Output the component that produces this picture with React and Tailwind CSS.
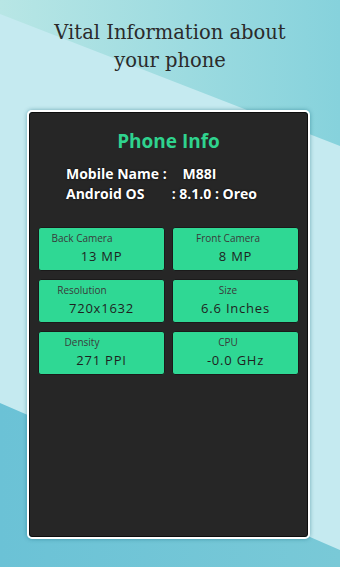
const tiles = [
  { label: "Back Camera", value: "13 MP" },
  { label: "Front Camera", value: "8 MP" },
  { label: "Resolution", value: "720x1632" },
  { label: "Size", value: "6.6 Inches" },
  { label: "Density", value: "271 PPI" },
  { label: "CPU", value: "-0.0 GHz" },
];

const Backdrop = () => (
  <svg className="absolute inset-0" width="340" height="567" viewBox="0 0 340 567">
    <defs>
      <linearGradient id="top" x1="0" y1="0" x2="1" y2="0">
        <stop offset="0" stopColor="#b8e6e5" />
        <stop offset="1" stopColor="#86d2dc" />
      </linearGradient>
      <linearGradient id="bot" x1="0" y1="0" x2="1" y2="0">
        <stop offset="0" stopColor="#6bc2d6" />
        <stop offset="1" stopColor="#79c9d7" />
      </linearGradient>
    </defs>
    <rect width="340" height="567" fill="#c5eaf0" />
    <polygon points="0,0 340,0 340,146 0,14" fill="url(#top)" />
    <polygon points="0,403 340,550 340,567 0,567" fill="url(#bot)" />
  </svg>
);

const Tile = ({ label, value, right }) => (
  <div className="h-[44px] rounded-[3px] border border-[#1a1a1a] bg-[#2fd894] pt-[4px]">
    <div className={"text-center text-[10px] leading-[13px] text-[#3a3a3a] " + (right ? "w-[110px]" : "w-[86px]")}>
      {label}
    </div>
    <div className="mt-[3px] text-center text-[13px] font-medium leading-[16px] tracking-[0.06em] text-[#1f1f1f]">
      {value}
    </div>
  </div>
);

const App = () => {
  return (
    <div className="relative h-[567px] w-[340px] overflow-hidden" style={{ fontFamily: "'Open Sans', sans-serif" }}>
      <Backdrop />
      <div className="relative flex flex-col">
        <h1 className="pt-[19px] text-center text-[19.5px] leading-[28px] text-[#2b2b2b]" style={{ fontFamily: "'DejaVu Serif', serif" }}>
          Vital Information about
          <br />
          your phone
        </h1>
        <div className="ml-[27px] mt-[35px] h-[429px] w-[283px] rounded-[5px] border-2 border-white shadow-[0_0_4px_rgba(0,90,110,0.45)]">
          <div className="h-full rounded-[3px] border border-[#0d0d0d] bg-[#262626] px-[8px]">
            <h2 className="pt-[16px] text-center text-[19px] font-bold leading-[24px] text-[#2fd38e]">Phone Info</h2>
            <div className="mt-[11px] ml-[28px] grid grid-cols-[102px_1fr] text-[14px] font-bold leading-[20px] text-white [text-shadow:0_0_2px_#000]">
              <span>Mobile Name :</span>
              <span className="whitespace-pre">    M88I</span>
              <span>Android OS</span>
              <span className="whitespace-pre"> : 8.1.0 : Oreo</span>
            </div>
            <div className="mt-[23px] grid grid-cols-2 gap-x-[7px] gap-y-[8px]">
              {tiles.map((t, i) => (
                <Tile key={t.label} label={t.label} value={t.value} right={i % 2 === 1} />
              ))}
            </div>
          </div>
        </div>
      </div>
    </div>
  );
};

export default App;
